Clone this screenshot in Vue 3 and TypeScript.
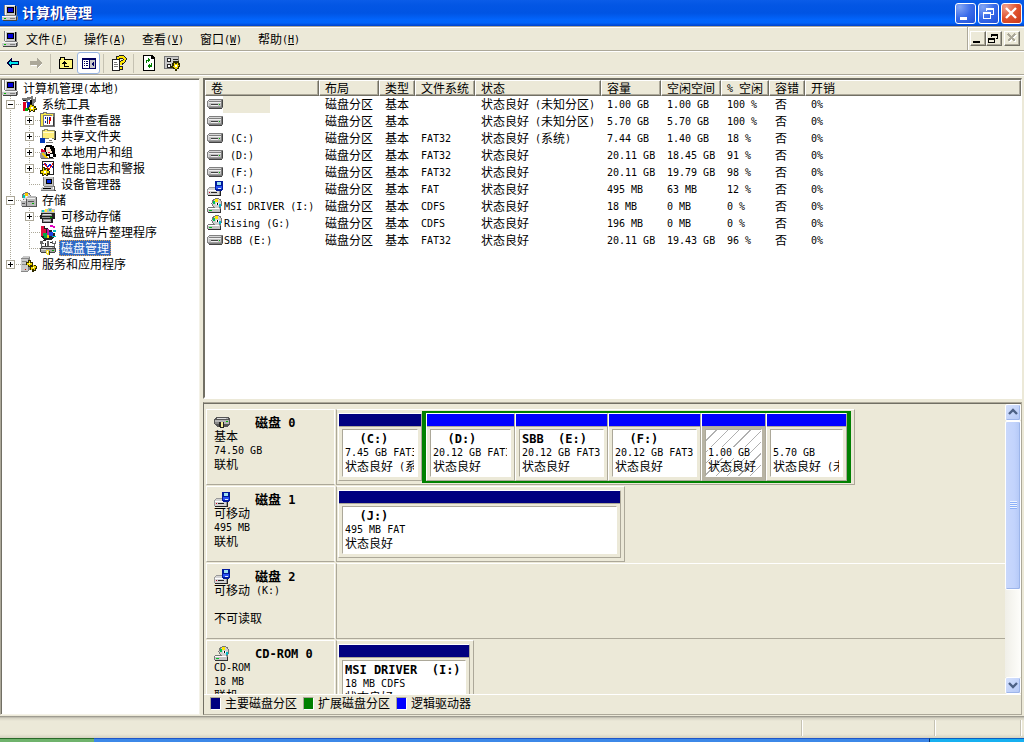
<script setup lang="ts">
import { h } from 'vue'

/* Renders mixed Chinese / Latin text with each script at its own size. */
const T = (props: { text: string }) =>
  h(
    'span',
    { class: 'mixed' },
    (props.text.match(/[\u2e80-\u9fff]+|[^\u2e80-\u9fff]+/g) ?? []).map((run) =>
      /[\u2e80-\u9fff]/.test(run) ? run : h('span', { class: 'latin' }, run),
    ),
  )
T.props = ['text']

const Icon = (props: { name: string }) =>
  h('svg', { class: 'icon', viewBox: '0 0 16 16', 'aria-hidden': 'true' }, [h('use', { href: '#i-' + props.name })])
Icon.props = ['name']

const menus = [
  ['文件', 'F'],
  ['操作', 'A'],
  ['查看', 'V'],
  ['窗口', 'W'],
  ['帮助', 'H'],
]

type Guide = 'line' | 'tee' | 'end' | 'none'
interface TreeNode {
  label: string
  icon: string
  guides: Guide[]
  toggle?: string
  selected?: boolean
}
const tree: TreeNode[] = [
  { label: '计算机管理(本地)', icon: 'computer', guides: [] },
  { label: '系统工具', icon: 'tools', guides: ['tee'], toggle: '-' },
  { label: '事件查看器', icon: 'event', guides: ['line', 'tee'], toggle: '+' },
  { label: '共享文件夹', icon: 'share', guides: ['line', 'tee'], toggle: '+' },
  { label: '本地用户和组', icon: 'users', guides: ['line', 'tee'], toggle: '+' },
  { label: '性能日志和警报', icon: 'perf', guides: ['line', 'tee'], toggle: '+' },
  { label: '设备管理器', icon: 'device', guides: ['line', 'end'] },
  { label: '存储', icon: 'storage', guides: ['tee'], toggle: '-' },
  { label: '可移动存储', icon: 'removable', guides: ['line', 'tee'], toggle: '+' },
  { label: '磁盘碎片整理程序', icon: 'defrag', guides: ['line', 'tee'] },
  { label: '磁盘管理', icon: 'diskmgmt', guides: ['line', 'end'], selected: true },
  { label: '服务和应用程序', icon: 'services', guides: ['end'], toggle: '+' },
]

const columns = ['卷', '布局', '类型', '文件系统', '状态', '容量', '空闲空间', '% 空闲', '容错', '开销']
const volumes = [
  ['drive', '', '', '状态良好 (未知分区)', '1.00 GB', '1.00 GB', '100 %'],
  ['drive', '', '', '状态良好 (未知分区)', '5.70 GB', '5.70 GB', '100 %'],
  ['drive', ' (C:)', 'FAT32', '状态良好 (系统)', '7.44 GB', '1.40 GB', '18 %'],
  ['drive', ' (D:)', 'FAT32', '状态良好', '20.11 GB', '18.45 GB', '91 %'],
  ['drive', ' (F:)', 'FAT32', '状态良好', '20.11 GB', '19.79 GB', '98 %'],
  ['usb', ' (J:)', 'FAT', '状态良好', '495 MB', '63 MB', '12 %'],
  ['cd', 'MSI DRIVER (I:)', 'CDFS', '状态良好', '18 MB', '0 MB', '0 %'],
  ['cd', 'Rising (G:)', 'CDFS', '状态良好', '196 MB', '0 MB', '0 %'],
  ['drive', 'SBB (E:)', 'FAT32', '状态良好', '20.11 GB', '19.43 GB', '96 %'],
]

interface Part {
  name: string
  size: string
  status: string
  width: number
  selected?: boolean
}
interface Disk {
  name: string
  icon: string
  lines: string[]
  primary: Part[]
  logical: Part[]
  empty?: boolean
}
const disks: Disk[] = [
  {
    name: '磁盘 0',
    icon: 'hdd',
    lines: ['基本', '74.50 GB', '联机'],
    primary: [{ name: '  (C:)', size: '7.45 GB FAT32', status: '状态良好 (系统)', width: 84 }],
    logical: [
      { name: '  (D:)', size: '20.12 GB FAT32', status: '状态良好', width: 89 },
      { name: 'SBB  (E:)', size: '20.12 GB FAT32', status: '状态良好', width: 93 },
      { name: '  (F:)', size: '20.12 GB FAT32', status: '状态良好', width: 93 },
      { name: '', size: '1.00 GB', status: '状态良好', width: 65, selected: true },
      { name: '', size: '5.70 GB', status: '状态良好 (未知分区)', width: 81 },
    ],
  },
  {
    name: '磁盘 1',
    icon: 'usb',
    lines: ['可移动', '495 MB', '联机'],
    primary: [{ name: '  (J:)', size: '495 MB FAT', status: '状态良好', width: 283 }],
    logical: [],
  },
  { name: '磁盘 2', icon: 'usb', lines: ['可移动 (K:)', '', '不可读取'], primary: [], logical: [], empty: true },
  {
    name: 'CD-ROM 0',
    icon: 'cd',
    lines: ['CD-ROM', '18 MB', '联机'],
    primary: [{ name: 'MSI DRIVER  (I:)', size: '18 MB CDFS', status: '状态良好', width: 132 }],
    logical: [],
  },
]
</script>

<template>
  <div class="window">
    <svg class="defs" width="0" height="0" aria-hidden="true">
      <symbol id="i-computer" viewBox="0 0 16 16">
        <path fill="#c8c8c8" d="M3 0h10v10H3zM0 11h14v4H0z" />
        <path fill="#f4f4f4" d="M3 0h10v1H3zM3 0h1v10H3zM0 11h14v1H0z" />
        <path fill="#808080" d="M2 0h1v10H2zM14 1h1v10h-1zM3 10h11v1H3zM8 13h5v1H8zM15 11h1v4h-1z" />
        <path fill="#000" d="M5 2h7v6H5zM13 1h1v9h-1z" />
        <path fill="#0000d8" d="M6 3h5v4H6z" />
        <path fill="#444" d="M1 15h14v1H1zM14 12h1v3h-1z" />
        <path fill="#0b0" d="M2 13h2v1H2z" />
      </symbol>
      <symbol id="i-tools" viewBox="0 0 16 16">
        <path fill="#777" d="M1 2h5V1h3v3H7v3H5V4H1zM10 0h2v3h2V1h1v4l-2 2v4h-2V5L9 3z" />
        <path fill="#000" d="M2 4h3v1H2zM9 4h2v5H9zM4 7h1v8H4z" />
        <path fill="#e00020" d="M2 6h3v9H2z" />
        <path fill="#0020c0" d="M6 6h3v8H6z" />
        <path fill="#0a0" d="M4 12h3v3H4z" />
        <path fill="#302c00" d="M9 8h2v1h2v1h2v2h1v2h-2v2h-2v-1h-2v1H8v-2H7v-3h1z" />
        <path fill="#f2d900" d="M9 9h2v1h2v2h2v1h-2v2h-1v-1h-2v1H9v-2H8v-2h1z" />
        <path fill="#fff" d="M10 11h2v2h-2z" />
      </symbol>
      <symbol id="i-event" viewBox="0 0 16 16">
        <path fill="#777" d="M0 1h3V0h4v1h8v14H0z" />
        <path fill="#f6e84a" d="M1 2h3V1h2v1h7v12H1z" />
        <path fill="#fff" d="M4 4h9v9H4z" />
        <path fill="#777" d="M3 3h9v1H3zM3 3h1v11H3zM4 13h9v1H4z" />
        <path fill="#333" d="M13 5h1v9h-1zM7 5h1v7H7z" />
        <path fill="#0018c8" d="M5 5h1v2H5zM5 9h1v2H5zM9 5h1v3H9z" />
        <path fill="#e00000" d="M9 8h1v4H9zM10 5h1v4h-1z" />
      </symbol>
      <symbol id="i-share" viewBox="0 0 16 16">
        <path fill="#8b8b64" d="M2 2h2V1h4v1h7v9H2z" />
        <path fill="#ffee7a" d="M3 3h2V2h2v1h7v7H3z" />
        <path fill="#fffbd0" d="M3 4h11v1H3z" />
        <path fill="#222" d="M15 3h1v9h-4v-1h3z" />
        <path fill="#0038b8" d="M0 10h5v5H0z" />
        <path fill="#fff" d="M5 11h4v-1h3v1h2v1h-2v1h1v1H5z" />
        <path fill="#777" d="M5 14h8v1H6zM9 12h3v1H9z" />
      </symbol>
      <symbol id="i-users" viewBox="0 0 16 16">
        <path fill="#999" d="M1 8h5v6H0v-4z" />
        <path fill="#000" d="M6 1h6v1h2v2h1v6h1v3h-3v1H9v-2H6V8H4V4h1V2z" />
        <path fill="#ffe9d0" d="M6 3h4v2h1v2h1v2h-2v1H7V8H6z" />
        <path fill="#e00030" d="M1 5h2v1h2v2H1zM8 8h2v1H8z" />
        <path fill="#fff" d="M10 10h3v3h-3z" />
        <path fill="#f0c800" d="M2 9h2v1h1v1h1v1h1v1h1v2H6v-1H5v-1H4v-1H3v-1H2z" />
        <path fill="#666" d="M1 14h13v1H1z" />
      </symbol>
      <symbol id="i-perf" viewBox="0 0 16 16">
        <path fill="#222" d="M2 1h12v14H2z" />
        <path fill="#fff" d="M3 2h10v12H3z" />
        <path fill="none" stroke="#0020e0" d="M3 5l2-2 3 4 2-3 3 4" />
        <path fill="none" stroke="#e01010" d="M4 3l3 4 2 3 4-7" />
        <path fill="#302c00" d="M2 7h3v1h2v1h2v2h1v3H8v2H6v-1H4v1H2v-2H0v-4h2z" />
        <path fill="#f2d900" d="M3 8h1v2h2v-1h1v2h2v2H7v2H6v-1H4v1H3v-2H1v-2h2z" />
        <path fill="#fff" d="M4 11h2v2H4z" />
      </symbol>
      <symbol id="i-device" viewBox="0 0 16 16">
        <path fill="#c4c4c4" d="M4 1h9v9H4zM2 11h11l1 3H1z" />
        <path fill="#808080" d="M3 1h1v9H3zM13 1h1v10h-1zM4 10h9v1H4zM1 14h13v1H1z" />
        <path fill="#000" d="M6 3h6v5H6zM3 12h8v1H3z" />
        <path fill="#0028e0" d="M7 4h4v3H7z" />
        <path fill="#555" d="M14 10h1v4h1v1h-2z" />
      </symbol>
      <symbol id="i-storage" viewBox="0 0 16 16">
        <circle cx="5.5" cy="4.5" r="4" fill="#ddd" stroke="#777" />
        <path fill="#fc0" d="M4 1h3v3H4z" />
        <path fill="#0cb" d="M2 3h2v3H2z" />
        <path fill="#fff" d="M5 4h1v1H5z" />
        <path fill="#b8b8b8" d="M5 6l2-2h7l1 1v9H5zM0 8h6v6H0z" />
        <path fill="#f0f0f0" d="M6 6h8v1H6zM0 8h5v1H0z" />
        <path fill="#555" d="M15 5h1v10H1v-1h14zM7 9h6v1H7zM1 11h3v1H1zM5 7h1v7H5z" />
        <path fill="#0a0" d="M11 11h2v1h-2z" />
      </symbol>
      <symbol id="i-removable" viewBox="0 0 16 16">
        <path fill="#bbb" d="M1 2h4V1h3V0h4v1h3v5H1z" />
        <path fill="#0cc" d="M2 2h2v2H2zM9 1h2v2H9z" />
        <path fill="#fe3" d="M5 1h2v3H5zM12 2h2v2h-2z" />
        <path fill="#222" d="M1 5h14v6h-2v4H2v-4H0V7h1z" />
        <path fill="#999" d="M2 6h10v2H2zM2 9h9v1H2zM3 11h8v3H3z" />
        <path fill="#ddd" d="M3 6h8v1H3zM4 12h6v1H4z" />
        <path fill="#0a0" d="M10 9h2v1h-2z" />
      </symbol>
      <symbol id="i-defrag" viewBox="0 0 16 16">
        <path fill="#222" d="M1 2h4v2h3v2h4v3h3v4l-4 3H5l-4-3z" />
        <path fill="#e01040" d="M1 2h3v3h2v4H3v3H1z" />
        <path fill="#0a4" d="M3 9h4v5H4z" />
        <path fill="#c018a0" d="M7 5h2v6H7z" />
        <path fill="#2040e0" d="M9 8h4v4H9z" />
        <path fill="#fc0" d="M7 11h2v3H7z" />
        <path fill="#e000c0" d="M10 1h3v1h2v2h-2V3h-3z" />
        <path fill="#00b8c0" d="M13 6h3v2h-3zM12 12h4v1h-4z" />
      </symbol>
      <symbol id="i-diskmgmt" viewBox="0 0 16 16">
        <path fill="#666" d="M0 1h3v2h1v1H2v3H1V4H0zM7 1h2v6H7zM12 1h1v2h2V1h1v3h-1v3h-1V4h-2z" />
        <path fill="#222" d="M3 0h3v1H3zM10 2h2v1h-2zM5 3h1v4H5z" />
        <path fill="#444" d="M3 6h10l3 2v4l-2 1H2l-2-1V8z" />
        <path fill="#a4a4a4" d="M3 7h10l1 1H1zM1 9h14v3H1z" />
        <path fill="#ddd" d="M3 7h9v1H3zM1 9h5v1H1z" />
        <path fill="#f4dc30" d="M6 10h3v5H7l-1-2z" />
        <path fill="#fff" d="M7 11h1v2H7z" />
        <path fill="#333" d="M9 11h1v4H9z" />
        <path fill="#0a0" d="M12 10h2v1h-2z" />
      </symbol>
      <symbol id="i-services" viewBox="0 0 16 16">
        <path fill="#c9c9c9" d="M0 2l2-2h7v13l-2 2H0z" />
        <path fill="#888" d="M0 2h7v1H0zM7 2l2-2v13l-2 2zM1 5h5v1H1zM1 8h5v1H1zM0 15h7v1H0z" />
        <path fill="#d00" d="M4 13h1v1H4z" />
        <path fill="#302c00" d="M7 4h3v2h2v3h3v1h1v3h-1v2h-2v1h-2v-2H9v-3H7V9H5V6h2z" />
        <path fill="#f2d900" d="M8 5h1v2h2v2H9v1H8V9H6V7h2zM12 9h1v1h2v2h-1v2h-1v-1h-2v1h-1v-3h2z" />
        <path fill="#fff" d="M12 11h1v1h-1zM8 7h1v1H8z" />
      </symbol>
      <symbol id="i-drive" viewBox="0 0 16 16">
        <path fill="#808080" d="M2 3h13l1 1v7l-1 1H1l-1-1V5z" />
        <path fill="#d8d8d8" d="M2 4h12v1H2zM1 5h1v5H1z" />
        <path fill="#c0c0c0" d="M2 6h12v5H2z" />
        <path fill="#9c9c9c" d="M1 10h13v1H1z" />
        <path fill="#444" d="M4 8h7v1H4zM2 12h13v1H2zM15 4h1v7h-1z" />
        <path fill="#eee" d="M2 6h12v1H2zM4 9h7v1H4z" />
        <path fill="#0b0" d="M12 8h1v1h-1z" />
      </symbol>
      <symbol id="i-usb" viewBox="0 0 16 16">
        <path fill="#999" d="M2 6h7v3h4v5H0V8z" />
        <path fill="#d4d4d4" d="M2 7h7v1H2zM1 8h9v1H1zM1 9h11v5H1z" />
        <path fill="#fff" d="M1 9h10v1H1z" />
        <path fill="#222" d="M4 11h6v1H4zM1 14h13v1H1zM13 10h1v4h-1z" />
        <path fill="#d00020" d="M2 11h1v1H2z" />
        <path fill="#001a9c" d="M8 0h8v9h-1v1H9V9H8z" />
        <path fill="#9ce0f0" d="M10 1h4v3h-4z" />
        <path fill="#2850f0" d="M9 5h6v3H9z" />
        <path fill="#dfe8ff" d="M11 7h3v1h-3z" />
      </symbol>
      <symbol id="i-cd" viewBox="0 0 16 16">
        <circle cx="10" cy="5.5" r="5" fill="#d0d0d0" stroke="#777" />
        <path fill="#ffe800" d="M8 1h3v3H8z" />
        <path fill="#00c060" d="M6 3h2v3H6z" />
        <path fill="#0bc" d="M12 6h2v3h-2z" />
        <path fill="#fff" d="M9 5h3v2H9z" />
        <path fill="#000" d="M10 5h1v2h-1z" />
        <path fill="#777" d="M1 9h4l2 1h7v4H0v-4z" />
        <path fill="#c4c4c4" d="M1 10h12v4H1z" />
        <path fill="#fff" d="M1 10h11v1H1z" />
        <path fill="#333" d="M1 14h13v1H1zM13 11h1v3h-1z" />
        <path fill="#00c020" d="M2 12h3v1H2z" />
      </symbol>
      <symbol id="i-hdd" viewBox="0 0 16 16">
        <path fill="#555" d="M3 2h11l2 2v6l-3 2H3L0 9V4z" />
        <path fill="#b4b4b4" d="M3 3h10l1 1H2zM1 5h14v4H1z" />
        <path fill="#ddd" d="M3 3h9v1H3z" />
        <path fill="#888" d="M1 7h5v2H1z" />
        <path fill="#222" d="M5 7h5v6H6l-1-2z" />
        <path fill="#f4ec90" d="M7 7h2v5H7z" />
        <path fill="#0b0" d="M12 6h2v1h-2z" />
      </symbol>
      <symbol id="i-back" viewBox="0 0 16 16">
        <path fill="#00e8f0" stroke="#000040" d="M2.500 8l4-4v2.500h7v3h-7v2.500z" />
      </symbol>
      <symbol id="i-forward" viewBox="0 0 16 16">
        <path fill="#fff" d="M3 8h7V5l5 4-5 4v-2H3z" />
        <path fill="#aca899" d="M2 6h7V3l5 5-5 5v-3H2z" />
      </symbol>
      <symbol id="i-up" viewBox="0 0 16 16">
        <path fill="#000" d="M1 4h1V2h5v2h8v10H1z" />
        <path fill="#fff67a" d="M2 5h1V3h3v2h8v8H2z" />
        <path fill="#000" d="M4 8h1V7h1V6h1v1h1v1h1v1H7v2h4v1H6V9H4z" />
      </symbol>
      <symbol id="i-panes" viewBox="0 0 16 16">
        <path fill="#000060" d="M1 3h14v11H1z" />
        <path fill="#fff" d="M2 5h6v8H2z" />
        <path fill="#c8c8c8" d="M9 5h5v8H9z" />
        <path fill="#000060" d="M3 6h1v1H3zM5 6h2v1H5zM3 8h1v1H3zM5 8h2v1H5zM3 10h1v1H3zM5 10h2v1H5zM10 9l3-3v6z" />
      </symbol>
      <symbol id="i-help" viewBox="0 0 16 16">
        <path fill="#222" d="M1 4h8v12H1z" />
        <path fill="#fff" d="M2 5h6v10H2z" />
        <path fill="#777" d="M3 7h3v1H3zM3 9h4v1H3zM3 11h4v1H3z" />
        <path fill="none" stroke="#222" stroke-width="4" d="M7 5V3l2-1h3l2 2-1 2-3 2v2" />
        <path fill="none" stroke="#ffe600" stroke-width="2" d="M7 4V3l2-1h3l2 2-1 2-3 2v2" />
        <path fill="#222" d="M8 11h4v4H8z" />
        <path fill="#ffe600" d="M9 12h2v2H9z" />
      </symbol>
      <symbol id="i-refresh" viewBox="0 0 16 16">
        <path fill="#000" d="M2 0h9l3 3v13H2z" />
        <path fill="#fff" d="M3 1h7v3h3v11H3z" />
        <path fill="#008000" d="M7 3l3 2-3 2V6H6v2H5V5h2zM9 13l-3-2 3-2v1h1V8h1v4H9z" />
      </symbol>
      <symbol id="i-settings" viewBox="0 0 16 16">
        <path fill="#777" d="M0 1h15v13H0z" />
        <path fill="#c8c8c8" d="M1 2h13v11H1z" />
        <path fill="#222" d="M3 3h4v4H3zM3 9h4v4H3zM9 4h5v1H9zM9 6h4v1H9z" />
        <path fill="#fff" d="M4 4h2v2H4zM4 10h2v2H4z" />
        <path fill="#302c00" d="M9 6h2v1h2V6h2v2h1v4h-1v2h-2v2h-2v-2H9v-1H7v-2h1V8h1z" />
        <path fill="#f2d900" d="M10 8h1v1h2V8h1v2h1v1h-1v2h-1v1h-2v-1h-1v-1H9v-1h1z" />
        <path fill="#fff" d="M11 10h2v2h-2z" />
      </symbol>
    </svg>

    <header class="title-bar">
      <Icon name="computer" />
      <h1>计算机管理</h1>
      <div class="caption-buttons">
        <button type="button" aria-label="最小化">
          <svg viewBox="0 0 19 19"><path fill="#fff" d="M4 13h7v3H4z" /></svg>
        </button>
        <button type="button" aria-label="还原">
          <svg viewBox="0 0 19 19">
            <path fill="none" stroke="#fff" d="M7.500 7V4.500h7v6H12M4.500 8.500h7v6h-7z" />
            <path fill="#fff" d="M7 4h8v2H7zM4 8h8v2H4z" />
          </svg>
        </button>
        <button type="button" class="close" aria-label="关闭">
          <svg viewBox="0 0 19 19" class="smooth"><path fill="none" stroke="#fff" stroke-width="2.400" d="M4 4l10 10M14 4L4 14" /></svg>
        </button>
      </div>
    </header>

    <nav class="menu-bar">
      <Icon name="computer" />
      <div class="menus">
        <button v-for="m in menus" :key="m[1]" type="button">
          {{ m[0] }}<span class="latin">(<u>{{ m[1] }}</u>)</span>
        </button>
      </div>
      <div class="mdi-buttons">
        <button type="button" aria-label="最小化子窗口">
          <svg viewBox="0 0 14 13"><path d="M2 9h7v2H2z" /></svg>
        </button>
        <button type="button" aria-label="还原子窗口">
          <svg viewBox="0 0 14 13"><path fill="none" stroke="#000" d="M4.500 5V2.500h6v4H9M1.500 6.500h6v4h-6z" /><path d="M4 2h7v2H4zM1 6h7v2H1z" /></svg>
        </button>
        <button type="button" class="apart" aria-label="关闭子窗口" disabled>
          <svg viewBox="0 0 14 13"><path fill="none" stroke="#fff" stroke-width="2" d="M4 3l7 7M11 3l-7 7" /><path fill="none" stroke="#aca899" stroke-width="2" d="M3 2l7 7M10 2L3 9" /></svg>
        </button>
      </div>
    </nav>

    <div class="tool-bar" role="toolbar">
      <button type="button" aria-label="后退"><Icon name="back" /></button>
      <button type="button" aria-label="前进" disabled><Icon name="forward" /></button>
      <i class="divider"></i>
      <button type="button" aria-label="向上"><Icon name="up" /></button>
      <button type="button" class="pressed" aria-label="显示控制台树" aria-pressed="true"><Icon name="panes" /></button>
      <i class="divider"></i>
      <button type="button" aria-label="帮助"><Icon name="help" /></button>
      <i class="divider"></i>
      <button type="button" aria-label="刷新"><Icon name="refresh" /></button>
      <button type="button" aria-label="设置"><Icon name="settings" /></button>
    </div>

    <main class="panes">
      <ul class="tree">
        <li v-for="node in tree" :key="node.label">
          <span v-for="(g, i) in node.guides" :key="i" class="guide" :class="g">
            <button
              v-if="node.toggle && i === node.guides.length - 1"
              type="button"
              class="toggle"
              :class="{ plus: node.toggle === '+' }"
              :aria-label="node.toggle === '+' ? '展开' : '折叠'"
            ></button>
          </span>
          <Icon :name="node.icon" />
          <span class="node-label" :class="{ selected: node.selected }"><T :text="node.label" /></span>
        </li>
      </ul>

      <div class="right">
        <section class="volume-list">
          <table>
            <colgroup>
              <col class="w-name" /><col class="w-m" /><col class="w-s" /><col class="w-m" /><col class="w-status" />
              <col class="w-m" /><col class="w-m" /><col class="w-free" /><col class="w-s" /><col />
            </colgroup>
            <thead>
              <tr>
                <th v-for="c in columns" :key="c" scope="col"><T :text="c" /></th>
              </tr>
            </thead>
            <tbody>
              <tr v-for="(v, i) in volumes" :key="i">
                <td class="name-cell">
                  <span class="name"><Icon :name="v[0]" /><span class="vol" :class="{ focus: i === 0 }"><T :text="v[1]" /></span></span>
                </td>
                <td><T text="磁盘分区" /></td>
                <td><T text="基本" /></td>
                <td><T :text="v[2]" /></td>
                <td><T :text="v[3]" /></td>
                <td><T :text="v[4]" /></td>
                <td><T :text="v[5]" /></td>
                <td><T :text="v[6]" /></td>
                <td><T text="否" /></td>
                <td><T text="0%" /></td>
              </tr>
            </tbody>
          </table>
        </section>

        <section class="disk-view">
          <div class="scroll-area">
            <div class="disks">
              <article v-for="d in disks" :key="d.name" class="disk">
                <div class="disk-label">
                  <div class="disk-head"><Icon :name="d.icon" /><strong><T :text="d.name" /></strong></div>
                  <p v-for="(l, i) in d.lines" :key="i"><T :text="l" /></p>
                </div>
                <div class="parts" :class="{ empty: d.empty }">
                  <div v-for="p in d.primary" :key="p.name" class="part" :style="{ width: p.width + 'px' }">
                    <div class="stripe"></div>
                    <div class="body">
                      <strong><T :text="p.name" /></strong>
                      <p><T :text="p.size" /></p>
                      <p><T :text="p.status" /></p>
                    </div>
                  </div>
                  <div v-if="d.logical.length" class="extended">
                    <div
                      v-for="p in d.logical"
                      :key="p.name + p.size"
                      class="part logical"
                      :class="{ picked: p.selected }"
                      :style="{ width: p.width + 'px' }"
                    >
                      <div class="stripe"></div>
                      <div class="body">
                        <strong><T :text="p.name" /></strong>
                        <p><T :text="p.size" /></p>
                        <p><T :text="p.status" /></p>
                      </div>
                    </div>
                  </div>
                </div>
              </article>
            </div>
            <div class="scrollbar">
              <button type="button" aria-label="向上滚动">
                <svg viewBox="0 0 14 15" class="smooth"><path fill="none" stroke="#4d6185" stroke-width="2.400" d="M3 9l4-4 4 4" /></svg>
              </button>
              <div class="track"><div class="thumb"><i></i></div></div>
              <button type="button" aria-label="向下滚动">
                <svg viewBox="0 0 14 15" class="smooth"><path fill="none" stroke="#4d6185" stroke-width="2.400" d="M3 5l4 4 4-4" /></svg>
              </button>
            </div>
          </div>
          <footer class="legend">
            <span class="key"><i class="navy"></i>主要磁盘分区</span>
            <span class="key"><i class="green"></i>扩展磁盘分区</span>
            <span class="key"><i class="blue"></i>逻辑驱动器</span>
          </footer>
        </section>
      </div>
    </main>

    <div class="status-bar"><i class="wide"></i><i class="mid"></i><i class="small"></i></div>
    <div class="taskbar"><i class="start"></i><i class="tasks"></i><i class="tray"></i></div>
  </div>
</template>

<style>
html,
body {
  background: #ece9d8;
}
.mixed {
  white-space: pre;
}
.latin {
  font-family: 'DejaVu Sans Mono', 'Liberation Mono', monospace;
  font-size: 10px;
  line-height: 10px;
  vertical-align: 1px;
}
strong .latin {
  font-size: 12px;
  line-height: 12px;
  vertical-align: baseline;
}
.icon {
  display: block;
  flex: none;
  width: 16px;
  height: 16px;
  shape-rendering: crispEdges;
}
</style>

<style scoped>
.window {
  display: flex;
  flex-direction: column;
  height: 100vh;
  overflow: hidden;
  background: #ece9d8;
  color: #000;
  font: 12px/16px 'Noto Sans CJK SC', sans-serif;
}
.window * {
  box-sizing: border-box;
}
.defs {
  position: absolute;
}
button {
  margin: 0;
  padding: 0;
  border: 0;
  background: none;
  color: inherit;
  font: inherit;
}
svg {
  display: block;
  shape-rendering: crispEdges;
}
.smooth {
  shape-rendering: auto;
}
p,
h1,
ul {
  margin: 0;
  padding: 0;
}
i {
  display: block;
}

.title-bar {
  display: flex;
  flex: none;
  align-items: center;
  height: 26px;
  padding: 0 2px;
  background: linear-gradient(#0a5ce8, #0356e4 20%, #0054e3 50%, #0264fb 75%, #0164fa 88%, #0040c8);
}
.title-bar h1 {
  flex: 1;
  padding: 0 0 2px 4px;
  color: #fff;
  font-size: 14px;
  line-height: 20px;
  text-shadow: 1px 1px 0 #0a1883;
}
.caption-buttons {
  display: flex;
  gap: 2px;
}
.caption-buttons button {
  width: 21px;
  height: 21px;
  border: 1px solid #fff;
  border-radius: 3px;
  background: radial-gradient(circle at 20% 15%, #84a6f4, #3a6cea 50%, #1f50d8);
}
.caption-buttons .close {
  background: radial-gradient(circle at 20% 15%, #f0a08c, #e0532e 50%, #c8381a);
}

.menu-bar {
  display: flex;
  flex: none;
  align-items: center;
  height: 25px;
  padding-left: 2px;
  border-top: 1px solid #aca899;
  border-bottom: 1px solid #aca899;
  box-shadow: inset 0 1px #fff;
}
.menus {
  display: flex;
  flex: 1;
  gap: 16px;
  padding-left: 8px;
}
.menus button {
  width: 42px;
  white-space: nowrap;
}
.mdi-buttons {
  display: flex;
  align-items: center;
  align-self: stretch;
  padding: 0 4px 0 2px;
  border-left: 1px solid #aca899;
  box-shadow: inset 1px 1px #fff;
}
.mdi-buttons button {
  width: 16px;
  height: 15px;
  border: 1px solid;
  border-color: #fff #716f64 #716f64 #fff;
  box-shadow: inset -1px -1px #aca899;
}
.mdi-buttons .apart {
  margin-left: 2px;
}

.tool-bar {
  display: flex;
  flex: none;
  align-items: center;
  height: 24px;
  padding-left: 1px;
  border-top: 1px solid #fff;
  border-bottom: 1px solid #aca899;
}
.tool-bar button {
  display: flex;
  align-items: center;
  justify-content: center;
  width: 23px;
  height: 22px;
}
.tool-bar .pressed {
  border: 1px solid #98b5e2;
  border-radius: 3px;
  background: #fff;
}
.divider {
  width: 1px;
  height: 19px;
  margin: 0 3px;
  background: #c5c2b2;
}

.panes {
  display: flex;
  flex: 1;
  gap: 3px;
  min-height: 0;
  padding: 2px 2px 1px 0;
  border-top: 1px solid #fff;
}
.tree {
  flex: none;
  width: 200px;
  border: 1px solid;
  border-color: #aca899 #f4f2e8 #f4f2e8 #aca899;
  box-shadow: inset 1px 1px #716f64;
  padding: 1px;
  background: #fff;
  list-style: none;
}
.tree li {
  display: flex;
  height: 16px;
}
.guide {
  position: relative;
  width: 19px;
  height: 16px;
}
.guide::before,
.guide.tee::after,
.guide.end::after {
  position: absolute;
  content: '';
}
.guide::before {
  top: 0;
  left: 8px;
  width: 1px;
  height: 16px;
  background: repeating-linear-gradient(#aca899 0 1px, transparent 1px 2px);
}
.guide.end::before {
  height: 8px;
}
.guide::after {
  top: 8px;
  left: 8px;
  width: 11px;
  height: 1px;
  background: repeating-linear-gradient(90deg, #aca899 0 1px, transparent 1px 2px);
}
.toggle {
  position: absolute;
  z-index: 1;
  top: 4px;
  left: 4px;
  width: 9px;
  height: 9px;
  border: 1px solid #aca899;
  background: linear-gradient(#000, #000) center / 5px 1px no-repeat, #fff;
}
.toggle.plus {
  background: linear-gradient(#000, #000) center / 5px 1px no-repeat, linear-gradient(#000, #000) center / 1px 5px no-repeat, #fff;
}
.node-label {
  margin-left: 3px;
  padding: 0 1px;
  border: 1px dotted transparent;
  line-height: 14px;
}
.node-label.selected {
  border-color: #e0a050;
  background: #316ac5;
  color: #fff;
}

.right {
  display: grid;
  flex: 1;
  grid-template-rows: minmax(0, 1fr) 313px;
  gap: 3px;
  min-width: 0;
}
.volume-list {
  overflow: hidden;
  border: 2px solid;
  border-color: #716f64 #fff #fff #716f64;
  border-right-width: 1px;
  background: #fff;
}
table {
  width: 100%;
  border-collapse: separate;
  border-spacing: 0;
  table-layout: fixed;
}
.w-name {
  width: 114px;
}
.w-m {
  width: 60px;
}
.w-s {
  width: 36px;
}
.w-status {
  width: 126px;
}
.w-free {
  width: 48px;
}
th,
td {
  overflow: hidden;
  padding: 0 0 0 6px;
  font-weight: 400;
  text-align: left;
  vertical-align: top;
  white-space: nowrap;
}
th {
  height: 16px;
  padding-left: 5px;
  border: 1px solid;
  border-color: #fff #716f64 #716f64 #fff;
  background: #ece9d8;
  box-shadow: inset -1px -1px #aca899;
  line-height: 14px;
}
td {
  height: 17px;
  line-height: 16px;
}
.name-cell {
  padding-left: 2px;
}
.name {
  display: flex;
  height: 17px;
}
.vol {
  padding-left: 1px;
}
.vol.focus {
  width: 47px;
  background: #ece9d8;
}

.disk-view {
  display: flex;
  flex-direction: column;
  min-height: 0;
  border: 1px solid;
  border-color: #aca899 #aca899 #aca899 #716f64;
  box-shadow: inset 0 1px #716f64;
}
.scroll-area {
  display: flex;
  flex: 1;
  min-height: 0;
  padding-top: 1px;
}
.disks {
  display: flex;
  flex: 1;
  flex-direction: column;
  gap: 1px;
  min-width: 0;
  overflow: hidden;
  padding: 5px 0 0 2px;
}
.disk {
  display: flex;
  flex: none;
  gap: 1px;
  height: 76px;
}
.disk-label {
  flex: none;
  width: 129px;
  padding: 5px 0 0 7px;
  border: 1px solid;
  border-color: #fff #fff #aca899 #fff;
  line-height: 14px;
}
.disk-label p {
  height: 14px;
}
.disk-head {
  display: flex;
  gap: 25px;
  height: 14px;
}
strong {
  display: block;
  height: 14px;
  font-size: 13px;
  line-height: 14px;
}
.parts {
  display: flex;
  align-items: center;
  padding: 0 3px 0 1px;
  border: 1px solid;
  border-color: #fff #aca899 #aca899 #aca899;
}
.parts.empty {
  flex: 1;
  border-right: 0;
}
.part {
  flex: none;
  height: 68px;
  border: 1px solid;
  border-color: #fff #aca899 #aca899 #fff;
}
.stripe {
  height: 13px;
  border-bottom: 1px solid #aca899;
  background: #000080;
}
.logical .stripe {
  background: #0000ff;
}
.body {
  height: 48px;
  margin: 2px 3px 0;
  padding: 1px 3px 0 2px;
  border: 1px solid;
  border-color: #aca899 #fff #fff #aca899;
  background: #fff;
  line-height: 14px;
}
.body strong,
.body p {
  height: 14px;
  overflow: hidden;
}
.extended {
  display: flex;
  border: solid #008000;
  border-width: 2px 4px;
}
.picked {
  background: #b8b4a4;
}
.picked .body {
  background: repeating-linear-gradient(135deg, #fff 0 7px, #b0b0b0 7px 8px);
}
.picked .body :deep(.latin) {
  background: #fff;
}

.scrollbar {
  display: flex;
  flex: none;
  flex-direction: column;
  width: 16px;
}
.scrollbar button {
  flex: none;
  width: 16px;
  height: 17px;
  border: 1px solid #fff;
  border-radius: 2px;
  background: linear-gradient(135deg, #d6e2fe, #b4c8f6);
  box-shadow: inset -1px -1px #9db5ea;
}
.track {
  flex: 1;
  background: linear-gradient(90deg, #f0efe8, #fefefb);
}
.thumb {
  display: flex;
  align-items: center;
  justify-content: center;
  height: 66%;
  border: 1px solid #fff;
  border-radius: 2px;
  background: linear-gradient(90deg, #c9d8fc, #c2d3fc 60%, #b4c8f6);
  box-shadow: inset -1px -1px #9db5ea;
}
.thumb i {
  width: 7px;
  height: 8px;
  background: repeating-linear-gradient(#eef4fe 0 1px, #8cb0f8 1px 2px);
}
.legend {
  display: flex;
  flex: none;
  gap: 6px;
  height: 20px;
  padding: 0 0 0 6px;
  border-top: 1px solid #fff;
}
.key {
  display: flex;
  gap: 4px;
}
.key i {
  width: 11px;
  height: 13px;
  margin-top: 2px;
  border: 1px solid;
  border-color: #aca899 #fff #fff #aca899;
}
.navy {
  background: #000080;
}
.green {
  background: #008000;
}
.blue {
  background: #0000ff;
}

.status-bar {
  display: flex;
  flex: none;
  gap: 0;
  height: 22px;
  padding: 4px 2px 2px 0;
  background: linear-gradient(#8c8a80, #d4d1c2 2px, #ece9d8 5px, #ece9d8 18px, #d5d2c0);
}
.status-bar i {
  border-right: 1px solid #fff;
  box-shadow: inset -1px 0 #c5c2b2;
}
.wide {
  flex: 1;
}
.mid {
  width: 133px;
}
.small {
  width: 86px;
}
.taskbar {
  display: flex;
  flex: none;
  height: 4px;
}
.start {
  width: 94px;
  border-top: 1px solid #2a6a2a;
  background: #6fb36c;
}
.tasks {
  flex: 1;
  border-top: 1px solid #1f56c8;
  background: #3c88e8;
}
.tray {
  width: 95px;
  border-top: 1px solid #0c60c0;
  border-left: 1px solid #0a3070;
  background: #16b0f0;
}
</style>
